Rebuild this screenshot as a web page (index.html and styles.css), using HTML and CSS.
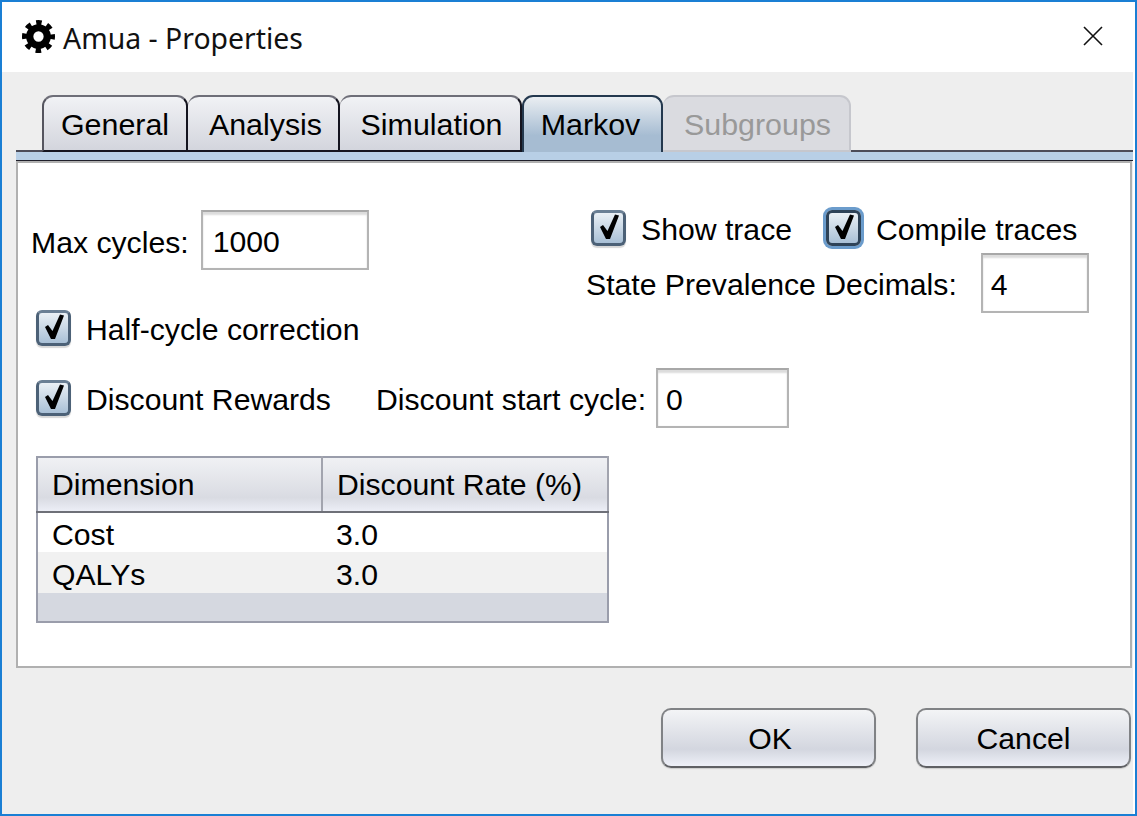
FILE: index.html
```html
<!DOCTYPE html>
<html lang="en">

<head>
    <meta charset="UTF-8">
    <title>Amua - Properties</title>
    <link rel="stylesheet" href="styles.css">
</head>

<body>
    <div class="window">
        <div class="titlebar">
            <svg class="gear" viewBox="0 0 32 32">
                <circle cx="16" cy="16" r="8.5" fill="none" stroke="#000" stroke-width="7"/>
                <circle cx="16" cy="16" r="13.5" fill="none" stroke="#000" stroke-width="5" stroke-dasharray="5.3 5.3" stroke-dashoffset="2.65"/>
            </svg>
            <span class="title">Amua - Properties</span>
            <svg class="close" viewBox="0 0 20 20">
                <path d="M1 1 L19 19 M19 1 L1 19" stroke="#111" stroke-width="1.6" fill="none"/>
            </svg>
        </div>

        <div class="content">
            <div class="tabs">
                <div class="tab tab-general">General</div>
                <div class="tab tab-analysis">Analysis</div>
                <div class="tab tab-simulation">Simulation</div>
                <div class="tab tab-markov selected">Markov</div>
                <div class="tab tab-subgroups disabled">Subgroups</div>
            </div>
            <div class="band"></div>

            <div class="panel">
                <div class="top">
                    <div class="left-col">
                        <div class="row">
                            <label class="cycles-label">Max cycles:</label>
                            <input class="field field-cycles" type="text" value="1000">
                        </div>
                        <div class="check-row half-cycle">
                            <span class="check"><svg viewBox="0 0 29 30"><polygon points="6,14 9,12 13.5,18 21,1.5 25,2.5 16,26 12,26"/></svg></span>
                            <span class="check-label">Half-cycle correction</span>
                        </div>
                    </div>
                    <div class="right-col">
                        <div class="trace-row">
                            <div class="check-row">
                                <span class="check"><svg viewBox="0 0 29 30"><polygon points="6,14 9,12 13.5,18 21,1.5 25,2.5 16,26 12,26"/></svg></span>
                                <span class="check-label">Show trace</span>
                            </div>
                            <div class="check-row compile">
                                <span class="check focused"><svg viewBox="0 0 29 30"><polygon points="6,14 9,12 13.5,18 21,1.5 25,2.5 16,26 12,26"/></svg></span>
                                <span class="check-label">Compile traces</span>
                            </div>
                        </div>
                        <div class="row decimals">
                            <label>State Prevalence Decimals:</label>
                            <input class="field field-decimals" type="text" value="4">
                        </div>
                    </div>
                </div>

                <div class="row discount">
                    <div class="check-row">
                        <span class="check"><svg viewBox="0 0 29 30"><polygon points="6,14 9,12 13.5,18 21,1.5 25,2.5 16,26 12,26"/></svg></span>
                        <span class="check-label">Discount Rewards</span>
                    </div>
                    <label class="start-label">Discount start cycle:</label>
                    <input class="field field-start" type="text" value="0">
                </div>

                <table class="rates">
                    <thead>
                        <tr>
                            <th class="col-dimension">Dimension</th>
                            <th>Discount Rate (%)</th>
                        </tr>
                    </thead>
                    <tbody>
                        <tr>
                            <td>Cost</td>
                            <td>3.0</td>
                        </tr>
                        <tr class="stripe">
                            <td>QALYs</td>
                            <td>3.0</td>
                        </tr>
                        <tr class="filler">
                            <td colspan="2"></td>
                        </tr>
                    </tbody>
                </table>
            </div>

            <div class="footer">
                <button class="btn btn-ok">OK</button>
                <button class="btn">Cancel</button>
            </div>
        </div>
    </div>
</body>

</html>
```

FILE: styles.css
```css
html,
body {
    margin: 0;
    padding: 0;
    width: 1137px;
    height: 816px;
    overflow: hidden;
}

body {
    font-family: "Liberation Sans", Arial, sans-serif;
    font-size: 30.2px;
    color: #000;
}

.window {
    box-sizing: border-box;
    width: 1137px;
    height: 816px;
    border: 2px solid #1a7fd4;
    background-color: #fff;
}

.titlebar {
    display: flex;
    align-items: center;
    height: 70px;
    padding-left: 20px;
    padding-right: 32px;
}

.gear {
    width: 33px;
    height: 33px;
    margin-top: -2px;
}

.title {
    margin-left: 8px;
    padding-top: 2px;
    font-family: "Noto Sans", sans-serif;
    font-size: 28.4px;
    color: #111;
}

.close {
    width: 20px;
    height: 20px;
    margin-left: auto;
    margin-top: -2px;
}

.content {
    width: 1131px;
    height: 742px;
    background-color: #eee;
    padding-top: 23px;
    box-sizing: border-box;
}

/* tabs */
.tabs {
    display: flex;
    height: 57px;
    margin-left: 14px;
    padding-left: 26px;
    box-sizing: border-box;
    background: linear-gradient(#4c4c58, #4c4c58) bottom / 100% 2px no-repeat;
}

.tab {
    box-sizing: border-box;
    height: 57px;
    padding-top: 10px;
    font-size: 30.4px;
    text-align: center;
    border: 2px solid #14141f;
    border-top-color: #6e6e78;
    border-left-color: #55555f;
    border-radius: 11px 11px 0 0;
    background: linear-gradient(#f1f2f5, #d3d5dd);
}

.tab-general { width: 146px; }
.tab-analysis { width: 152px; border-left-width: 0; padding-left: 5px; }
.tab-simulation { width: 182px; border-left-width: 0; padding-left: 3px; }
.tab-markov { width: 141px; padding-right: 4px; }
.tab-subgroups { width: 188px; border-left-width: 0; padding-left: 3px; }

.tab.selected {
    border-color: #23384e;
    border-bottom: none;
    background: linear-gradient(#eaeef2, #a6bcd2 70%, #a6bcd2);
}

.tab.disabled {
    color: #999;
    border-color: #c6c7cd;
    background: #dadbe0;
}

.band {
    height: 8px;
    margin-left: 14px;
    background-color: #b8cfe6;
    border-bottom: 1px solid #1f1f2a;
}

/* main panel */
.panel {
    box-sizing: border-box;
    height: 507px;
    margin-left: 14px;
    width: 1116px;
    padding-left: 13px;
    background-color: #fff;
    border: 2px solid #b0b0b0;
}

.top {
    display: grid;
    grid-template-columns: 556px auto;
}

.left-col {
    padding-top: 47px;
}

.right-col {
    padding-top: 46px;
}

.row {
    display: flex;
    align-items: center;
}

.row label {
    margin-right: 13px;
    padding-top: 4px;
}

.row .cycles-label {
    padding-top: 6px;
}

.field {
    box-sizing: border-box;
    height: 60px;
    padding: 4px 0 0 10px;
    font-family: inherit;
    font-size: 30.2px;
    color: #000;
    background-color: #fff;
    border: 2px solid #b4b4b4;
    border-top-color: #a8a8a8;
    box-shadow: inset 0 3px 2px #dcdcdc, inset 0 0 1px #ddd;
    outline: none;
}

.field-cycles { width: 168px; margin-left: -1px; }
.field-decimals { width: 108px; margin-left: 11px; padding-left: 8px; }
.field-start { width: 133px; margin-left: -3px; padding-left: 8px; }

.check-row {
    display: flex;
    align-items: center;
    margin-left: 5px;
}

.check-label {
    line-height: 30px;
    padding-top: 3px;
}

.check {
    box-sizing: border-box;
    display: inline-flex;
    flex-shrink: 0;
    width: 35px;
    height: 36px;
    margin-right: 15px;
    border: 3px solid #4c6177;
    border-top-color: #6a7f94;
    border-radius: 6px;
    background: linear-gradient(#eaf0f5, #a9c0d6);
    box-shadow: 0 2px 1px #d8d8d8;
}

.check svg {
    width: 29px;
    height: 30px;
}

.check polygon {
    fill: #000;
}

.check.focused {
    border-color: #2e4358;
    box-shadow: 0 0 0 3px #6b9ccc;
}

.half-cycle {
    margin-top: 40px;
}

.trace-row {
    display: flex;
    align-items: center;
    height: 38px;
}

.trace-row .check-row {
    margin-left: 4px;
}

.trace-row .compile {
    margin-left: 34px;
}

.decimals {
    margin-top: 6px;
    margin-left: -1px;
}

.discount {
    margin-top: 22px;
}

.start-label {
    margin-left: 45px;
}

/* discount table */
.rates {
    box-sizing: border-box;
    width: 573px;
    height: 167px;
    margin-top: 28px;
    margin-left: 5px;
    border-collapse: collapse;
    border: 2px solid #9a9dab;
    table-layout: fixed;
}

.rates th {
    box-sizing: border-box;
    height: 55px;
    padding: 0 0 0 14px;
    font-weight: normal;
    text-align: left;
    background: linear-gradient(#f0f1f4, #d9dbe2 75%, #eceef6);
    border-bottom: 2px solid #6e7078;
    border-right: 2px solid #a2a4ae;
}

.rates .col-dimension {
    width: 285px;
}

.rates td {
    height: 40px;
    padding: 4px 0 0 14px;
    box-sizing: border-box;
}

.rates .stripe td {
    background-color: #f1f1f1;
}

.rates .filler td {
    height: 29px;
    padding: 0;
    background-color: #d5d8e0;
}

/* buttons */
.footer {
    display: flex;
    justify-content: flex-end;
    gap: 40px;
    padding-top: 40px;
    padding-right: 2px;
}

.btn {
    box-sizing: border-box;
    width: 215px;
    height: 60px;
    padding: 2px 0 0 0;
    font-family: inherit;
    font-size: 30.2px;
    color: #000;
    border: 2px solid #808285;
    border-bottom-color: #5f6064;
    border-radius: 10px;
    background: linear-gradient(#f3f4f6, #d3d6df 70%, #eef0f8);
    box-shadow: 0 1px 1px #ccc;
}

.btn-ok {
    padding-left: 3px;
}
```
